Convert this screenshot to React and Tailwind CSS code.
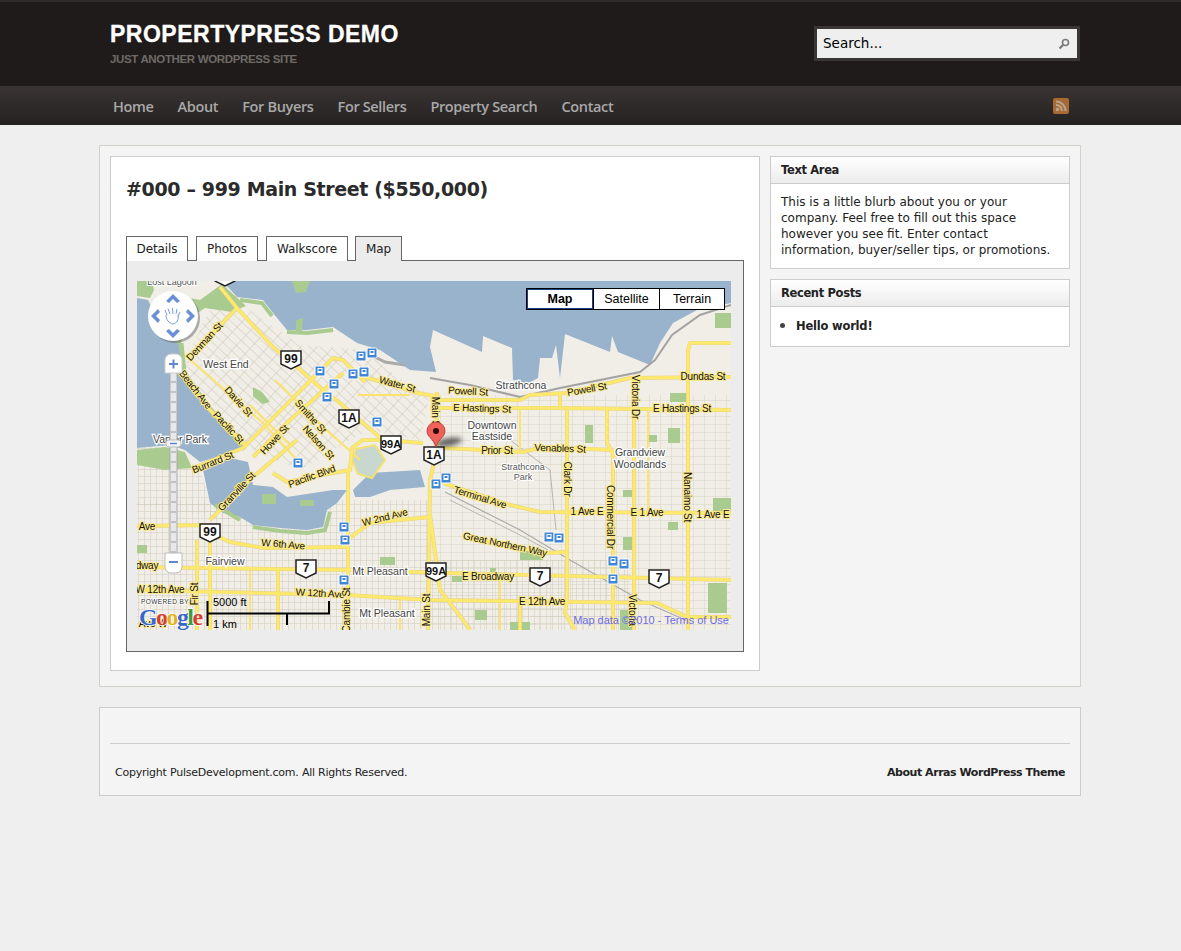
import React from 'react';

const NAV = ['Home', 'About', 'For Buyers', 'For Sellers', 'Property Search', 'Contact'];

// all map data is in page coordinates, the svg viewBox starts at 137,281
const WATER = [
  'M137,281 L731,281 L731,303 L697,310 L673,323 L660,343 L650,365 L618,352 L612,336 L610,352 L565,334 L560,378 L556,345 L552,358 L540,358 L538,378 L525,385 L513,380 L512,348 L483,336 L482,352 L433,330 L430,347 L436,372 L410,370 L395,360 L380,350 L357,343 L333,327 L307,330 L287,330 L273,313 L263,300 L237,297 L228,287 L215,281 Z',
  'M137,298 L148,300 L165,335 L180,343 L183,373 L207,407 L243,447 L230,453 L200,462 L185,450 L170,445 L137,448 Z',
  'M203,470 L230,458 L248,462 L253,485 L273,487 L287,497 L333,490 L347,490 L337,503 L327,510 L323,527 L307,530 L280,528 L253,525 L240,517 L223,513 L210,503 Z',
  'M353,490 L370,473 L420,470 L425,487 L390,490 L370,497 L355,497 Z',
];

const PARKS = [
  [713, 498, 18, 15], [708, 583, 19, 30], [475, 610, 12, 10], [520, 550, 23, 10], [623, 490, 10, 7],
  [623, 537, 9, 13], [668, 522, 10, 8], [585, 425, 8, 18], [670, 393, 17, 9], [715, 313, 16, 15],
  [668, 428, 12, 15], [647, 435, 10, 7], [380, 557, 15, 8], [137, 545, 10, 8], [510, 622, 20, 8],
  [620, 610, 16, 20], [300, 500, 14, 6], [262, 494, 14, 10], [452, 576, 10, 6], [490, 568, 6, 6],
];

const MAJOR_ROADS = [
  '220,287 237,308 273,347 297,367 323,390 340,403 363,423 383,440 423,443',
  '188,358 237,308',
  '183,373 207,407 247,447',
  '193,468 243,448 333,358 343,360 365,382',
  '253,457 290,420 343,373',
  '363,377 383,382 417,393 440,397',
  '430,408 557,408 731,410',
  '430,400 520,400 530,395 567,393 630,378 731,377',
  '443,448 523,452 543,447 613,450',
  '567,408 567,600 565,613 575,630',
  '607,410 607,443 613,453 613,630',
  '634,378 634,630',
  '731,343 690,343 688,350 688,630',
  '437,392 437,450 430,480 428,630',
  '430,515 440,590 463,620 470,630',
  '443,483 510,505 540,512 731,513',
  '463,537 547,553 567,552',
  '137,567 350,570 447,573 731,580',
  '137,590 347,595 430,600 657,603 687,617 731,617',
  '137,526 207,525 210,533 230,542 263,548 348,547',
  '347,540 370,523 430,517',
  '348,470 348,630',
  '197,540 197,630',
  '210,533 210,630',
  '278,568 278,630',
  '210,520 253,477 297,440',
  '273,473 287,482 333,473 350,470 352,448 363,440 383,440',
  '560,408 560,392',
  '520,600 520,630',
];

const MINOR_ROADS = [
  '188,358 263,423 297,460',
  '297,403 360,460',
  '275,380 335,438',
  '250,405 290,445',
  '358,395 410,395',
  '500,573 500,630',
  '400,598 400,630',
  '250,568 250,630',
  '648,410 648,513',
  '520,408 520,450',
];

const LABELS = [
  ['Denman St', 205, 342, -47], ['Beach Ave', 195, 390, 52], ['Davie St', 238, 402, 48], ['Pacific St', 228, 428, 47],
  ['Smithe St', 310, 417, 48], ['Nelson St', 318, 443, 48], ['Howe St', 275, 440, -47], ['Burrard St', 213, 463, -22],
  ['Pacific Blvd', 312, 477, -20], ['Granville St', 237, 492, -47], ['W 2nd Ave', 385, 518, -14], ['W 6th Ave', 283, 545, 5],
  ['Ave', 147, 527, 0], ['dway', 147, 566, 0], ['W 12th Ave', 160, 590, 0], ['W 12th Ave', 320, 594, 3], ['Ave W', 153, 624, 0],
  ['Fir St', 195, 594, -90], ['Water St', 397, 385, 15], ['Main St', 435, 413, 90], ['Powell St', 468, 392, 3],
  ['Powell St', 587, 390, -10], ['Victoria Dr', 635, 397, 90], ['Dundas St', 703, 377, 0], ['E Hastings St', 482, 409, 2],
  ['E Hastings St', 682, 409, 0], ['Prior St', 497, 451, 0], ['Venables St', 560, 449, 2], ['Clark Dr', 567, 479, 90],
  ['Terminal Ave', 480, 498, 17], ['1 Ave E', 587, 512, 0], ['E 1 Ave', 647, 513, 0], ['1 Ave E', 713, 515, 0],
  ['Commercial Dr', 610, 517, 90], ['Nanaimo St', 687, 497, 90], ['Great Northern Way', 505, 545, 12], ['E Broadway', 488, 577, 0],
  ['E 12th Ave', 542, 602, 0], ['Victoria', 632, 610, 90], ['Main St', 427, 610, -90], ['Cambie St', 347, 610, -90],
];

const PLACES = [
  ['West End', 226, 365], ['Strathcona', 521, 386], ['Downtown', 492, 426], ['Eastside', 492, 437], ['Grandview', 640, 453],
  ['Woodlands', 640, 465], ['Fairview', 225, 562], ['Mt Pleasant', 380, 572], ['Mt Pleasant', 387, 614], ['Vanier Park', 180, 440],
];

const SHIELDS = [
  ['', 225, 276], ['99', 291, 359], ['1A', 349, 418], ['99A', 391, 444], ['1A', 434, 455], ['99', 210, 532],
  ['7', 306, 568], ['99A', 436, 571], ['7', 540, 576], ['7', 659, 578],
];

const TRANSIT = [
  [372, 353], [361, 356], [320, 371], [353, 374], [364, 372], [334, 384], [327, 397], [377, 422], [298, 463],
  [344, 527], [345, 540], [344, 580], [436, 484], [446, 478], [549, 537], [559, 538], [613, 561], [624, 564], [613, 579],
];

const Shield = ({ label, x, y }) => (
  <g transform={`translate(${x},${y})`}>
    <path d="M-10,-8 L10,-8 L10,5 L0,10 L-10,5 Z" fill="#fff" stroke="#222" strokeWidth="1.5" />
    <text x="0" y="4" textAnchor="middle" fontSize={label.length > 2 ? 11 : 12} fontWeight="700" fill="#111">{label}</text>
  </g>
);

const Transit = ({ x, y }) => (
  <g transform={`translate(${x},${y})`}>
    <rect x="-5" y="-5" width="10" height="10" rx="1.5" fill="#3f87d6" stroke="#fff" strokeWidth="1" />
    <rect x="-2.5" y="-3" width="5" height="5" fill="#fff" />
    <rect x="-1.5" y="-2" width="3" height="2" fill="#3f87d6" />
  </g>
);

const MapDrawing = () => (
  <svg viewBox="137 281 594 349" className="block h-[349px] w-[594px]" fontFamily="'Liberation Sans', Arial, sans-serif">
    <defs>
      <pattern id="straightGrid" width="11" height="8" patternUnits="userSpaceOnUse">
        <path d="M0,0 H11 M0,0 V8" stroke="#d6d1c3" strokeWidth="1" fill="none" />
      </pattern>
      <pattern id="denseGrid" width="6" height="7" patternUnits="userSpaceOnUse">
        <path d="M0,0 H6 M0,0 V7" stroke="#cfcabb" strokeWidth="1" fill="none" />
      </pattern>
      <pattern id="downtownGrid" width="12" height="7" patternUnits="userSpaceOnUse" patternTransform="rotate(43)">
        <path d="M0,0 H12 M0,0 V7" stroke="#cbc6b6" strokeWidth="1" fill="none" />
      </pattern>
      <filter id="pinShadow" x="-50%" y="-100%" width="200%" height="300%">
        <feGaussianBlur stdDeviation="2.5" />
      </filter>
    </defs>

    <rect x="137" y="281" width="594" height="349" fill="#f1eee7" />
    <rect x="430" y="395" width="301" height="235" fill="url(#straightGrid)" />
    <rect x="137" y="500" width="293" height="130" fill="url(#denseGrid)" />
    <rect x="430" y="560" width="200" height="70" fill="url(#denseGrid)" />
    <polygon points="220,290 300,345 365,350 395,375 430,395 420,440 370,430 350,440 300,470 245,447 185,370 190,350" fill="url(#downtownGrid)" />
    <polygon points="137,448 170,445 200,470 210,503 230,520 137,505" fill="url(#denseGrid)" />

    {WATER.map((d, i) => <path key={i} d={d} fill="#99b3cc" />)}

    {/* parks and shoreline */}
    <path d="M137,281 L152,281 L154,290 L150,298 L137,296 Z" fill="#a9cb8f" />
    <path d="M165,305 L185,297 L200,300 L222,284 L246,306 L232,312 L205,308 L190,318 L180,345 L165,335 Z" fill="#a9cb8f" />
    <path d="M292,281 L310,281 L306,292 L296,293 Z M296,320 L303,318 L302,332 L296,333 Z" fill="#a9cb8f" />
    <path d="M181,343 L184,373 L208,407 L245,449" fill="none" stroke="#a9cb8f" strokeWidth="5" />
    <path d="M287,332 L307,333 L333,330 M240,300 L262,303 L272,316" fill="none" stroke="#a9cb8f" strokeWidth="4" />
    <path d="M137,450 L165,447 L185,452 L192,468 L165,470 L137,465 Z" fill="#a9cb8f" />
    <path d="M253,527 L280,531 L307,533 L325,530 L330,512 M215,505 L240,520" fill="none" stroke="#a9cb8f" strokeWidth="4" />
    <polygon points="253,387 262,392 270,402 262,404 253,396" fill="#a9cb8f" />
    <polygon points="356,449 375,445 385,460 372,478 358,474 352,460" fill="#c9d8cf" stroke="#f5e16f" strokeWidth="2" />
    {PARKS.map(([x, y, w, h], i) => <rect key={i} x={x} y={y} width={w} height={h} fill="#a9cb8f" />)}

    {/* rail lines */}
    <path d="M430,378 L470,385 L520,397 L560,388 L640,372 L655,360 L672,335 L700,315 L731,305" fill="none" stroke="#a3a3a3" strokeWidth="2" />
    <path d="M365,352 L385,362 L405,365" fill="none" stroke="#aaa" strokeWidth="3" />
    <path d="M445,492 L520,530 L570,560 L640,600 L690,622" fill="none" stroke="#aaa" strokeWidth="1.2" />
    <path d="M450,500 L520,535 L548,550 M510,440 L550,470 L556,530" fill="none" stroke="#b5b5b0" strokeWidth="1" />

    {MINOR_ROADS.map((p, i) => <polyline key={i} points={p} fill="none" stroke="#fbe36e" strokeWidth="2" />)}
    {MAJOR_ROADS.map((p, i) => <polyline key={i} points={p} fill="none" stroke="#e9d483" strokeWidth="4" strokeLinejoin="round" />)}
    {MAJOR_ROADS.map((p, i) => <polyline key={i} points={p} fill="none" stroke="#fde96c" strokeWidth="2.8" strokeLinejoin="round" />)}

    {PLACES.map(([text, x, y], i) => (
      <text key={i} x={x} y={y} textAnchor="middle" dominantBaseline="middle" fontSize="10.5" fill="#444" stroke="#fff" strokeWidth="2.5" paintOrder="stroke">{text}</text>
    ))}
    <text x="523" y="468" textAnchor="middle" dominantBaseline="middle" fontSize="9" fill="#555" stroke="#fff" strokeWidth="2" paintOrder="stroke">Strathcona</text>
    <text x="523" y="478" textAnchor="middle" dominantBaseline="middle" fontSize="9" fill="#555" stroke="#fff" strokeWidth="2" paintOrder="stroke">Park</text>
    <text x="172" y="285" textAnchor="middle" fontSize="9" fill="#555" stroke="#fff" strokeWidth="2" paintOrder="stroke">Lost Lagoon</text>
    {LABELS.map(([text, x, y, rot], i) => (
      <text key={i} x={x} y={y} textAnchor="middle" dominantBaseline="middle" transform={`rotate(${rot} ${x} ${y})`} fontSize="10" letterSpacing="-0.2" fill="#111" stroke="#fbe98c" strokeWidth="2" paintOrder="stroke">{text}</text>
    ))}

    {TRANSIT.map(([x, y], i) => <Transit key={i} x={x} y={y} />)}
    {SHIELDS.map(([label, x, y], i) => <Shield key={i} label={label} x={x} y={y} />)}

    {/* marker */}
    <ellipse cx="449" cy="442" rx="13" ry="4" transform="rotate(-10 449 442)" fill="#222" opacity="0.7" filter="url(#pinShadow)" />
    <path d="M436,447 C433,438 427,437 427,431 A9,9 0 1 1 445,431 C445,437 439,438 436,447 Z" fill="#f0615a" stroke="#a33" strokeWidth="0.8" />
    <circle cx="436" cy="431" r="3" fill="#2b0b0b" />

    {/* pan control */}
    <circle cx="175" cy="318" r="25" fill="#555" opacity="0.45" />
    <circle cx="173" cy="316" r="25" fill="#fff" />
    <g fill="#6b8fd4">
      <path d="M173,294 L180,301 L177,303 L173,299 L169,303 L166,301 Z" />
      <path d="M173,338 L180,331 L177,329 L173,333 L169,329 L166,331 Z" />
      <path d="M151,316 L158,309 L160,312 L156,316 L160,320 L158,323 Z" />
      <path d="M195,316 L188,309 L186,312 L190,316 L186,320 L188,323 Z" />
    </g>
    <path d="M167,315 L165,310 M170,314 L168,308.5 M173,314 L172.5,308 M176,314 L177,309 M178,316 L180,312 M166,315 C166,320 169,323 173,324 C177,323 179,320 178,315" fill="none" stroke="#7b98d4" strokeWidth="1" />

    {/* zoom slider */}
    <rect x="170" y="372" width="7" height="184" fill="#e8e8e8" stroke="#aaa" />
    {Array.from({ length: 18 }, (_, i) => (
      <path key={i} d={`M171,${382 + i * 10} H176`} stroke="#999" />
    ))}
    <path d="M165,373 V360 A6,6 0 0 1 171,354 H176 A6,6 0 0 1 182,360 V373 Z" fill="#fff" stroke="#ccc" />
    <path d="M169,364 H178 M173.5,359.5 V368.5" stroke="#5f86d2" strokeWidth="2" />
    <rect x="166" y="440" width="15" height="7" rx="3" fill="#f3f3f3" stroke="#bbb" />
    <path d="M170,443.5 H177" stroke="#5f86d2" strokeWidth="1.5" />
    <path d="M165,553 H182 V567 A6,6 0 0 1 176,573 H171 A6,6 0 0 1 165,567 Z" fill="#fff" stroke="#bbb" />
    <path d="M169,562 H178" stroke="#5f86d2" strokeWidth="2" />

    {/* logo and scale */}
    <text x="141" y="604" fontSize="6.5" fill="#333" stroke="#fff" strokeWidth="1.5" paintOrder="stroke" letterSpacing="0.4">POWERED BY</text>
    <text x="139" y="625" fontSize="24" letterSpacing="-1.6" fontWeight="700" fontFamily="'Liberation Serif', serif" stroke="#fff" strokeWidth="1.5" paintOrder="stroke">
      <tspan fill="#3a68c9">G</tspan><tspan fill="#d6402b">o</tspan><tspan fill="#e2b320">o</tspan><tspan fill="#3a68c9">g</tspan><tspan fill="#3f9c3f">l</tspan><tspan fill="#d6402b">e</tspan>
    </text>
    <path d="M207.5,601 V626 M207,613.5 H330 M329,601 V614 M287,613 V625" stroke="#000" strokeWidth="2" fill="none" />
    <text x="213" y="606" fontSize="11" fill="#000">5000 ft</text>
    <text x="213" y="628" fontSize="11" fill="#000">1 km</text>
    <text x="729" y="624" textAnchor="end" fontSize="11" fill="#6d6de0">Map data ©2010 - Terms of Use</text>
  </svg>
);

const Widget = ({ title, children }) => (
  <div className="border border-[#cccccc] bg-white">
    <h4 className="h-[27px] border-b border-[#cccccc] bg-gradient-to-b from-white to-[#ececec] px-[10px] text-[11.5px] leading-[27px] font-bold tracking-[-0.35px] text-[#222]">{title}</h4>
    {children}
  </div>
);

export default function App() {
  return (
    <div className="min-h-[951px] bg-[#efefef] text-[12px] text-[#222] font-['DejaVu_Sans',sans-serif]">
      <header className="h-[86px] border-t-2 border-[#2e2b2a] bg-[#1f1b1a]">
        <div className="flex items-start justify-between pt-[24px] pr-[101px] pl-[110px]">
          <div>
            <h1 className="text-[23px] leading-[16px] font-bold tracking-[0.5px] text-white [-webkit-text-stroke:0.3px_white] font-['Liberation_Sans',sans-serif]">PROPERTYPRESS DEMO</h1>
            <p className="mt-[11px] text-[11.5px] leading-[12px] font-bold tracking-[-0.35px] text-[#6f6a68] font-['Liberation_Sans',sans-serif]">JUST ANOTHER WORDPRESS SITE</p>
          </div>
          <div className="flex h-[35px] w-[266px] items-center border-[3px] border-[#3a3635] bg-[#efefef] pr-[7px] pl-[6px]">
            <input
              defaultValue="Search..."
              className="min-w-0 flex-1 bg-transparent text-[13.5px] text-black outline-none"
            />
            <svg width="12" height="12" viewBox="0 0 12 12" fill="none" stroke="#7a7a7a">
              <circle cx="7.5" cy="4.5" r="3" strokeWidth="1.6" />
              <path d="M5.3,6.7 L1.5,10.5" strokeWidth="2.2" />
            </svg>
          </div>
        </div>
      </header>

      <nav className="flex h-[39px] items-center justify-between bg-gradient-to-b from-[#3a3433] to-[#242221] pr-[112px] pl-[113px]">
        <ul className="flex gap-[24px] pt-[2px] text-[14.5px] font-semibold tracking-[-0.35px] text-[#a8a8a8] font-['Open_Sans',sans-serif]">
          {NAV.map((item) => <li key={item}>{item}</li>)}
        </ul>
        <svg width="16" height="16" viewBox="0 0 16 16">
          <rect width="16" height="16" rx="2" fill="#a86a33" />
          <circle cx="4.5" cy="11.5" r="1.8" fill="#b9a48e" />
          <path d="M3,7 A6,6 0 0 1 9,13 M3,3.5 A9.5,9.5 0 0 1 12.5,13" fill="none" stroke="#b9a48e" strokeWidth="2" />
        </svg>
      </nav>

      <main className="mt-[20px] ml-[99px] w-[982px] border border-[#d2d2ca] bg-[#f4f4f4] px-[10px] pt-[10px] pb-[15px]">
        <div className="flex gap-[10px]">
          <section className="h-[515px] w-[650px] border border-[#cccccc] bg-white px-[15px] pt-[18px]">
            <h2 className="text-[19px] leading-[28px] font-bold tracking-[-0.36px] text-[#2b2b2b]">#000 – 999 Main Street ($550,000)</h2>
            <div className="mt-[33px] flex gap-[8px] tracking-[-0.1px]">
              <div className="h-[25px] w-[62px] border border-b-0 border-[#666] bg-white text-center leading-[25px]">Details</div>
              <div className="h-[25px] w-[62px] border border-b-0 border-[#666] bg-white text-center leading-[25px]">Photos</div>
              <div className="h-[25px] w-[82px] border border-b-0 border-[#666] bg-white text-center leading-[25px]">Walkscore</div>
              <div className="relative z-10 -ml-px h-[25px] w-[47px] border border-b-0 border-[#666] bg-[#ececec] text-center leading-[25px]">Map</div>
            </div>
            <div className="-mt-px h-[392px] w-[618px] border border-[#666] bg-[#ececec] pt-[20px] pl-[10px]">
              <div className="relative w-[594px]">
                <MapDrawing />
                <div className="absolute top-[7px] left-[389px] flex h-[22px] w-[199px] border border-black bg-white text-[12.5px] leading-[19px] text-black font-['Liberation_Sans',sans-serif]">
                  <div className="w-[66px] border border-[#1d3f7a] text-center font-bold">Map</div>
                  <div className="w-[66px] border-l border-black pt-px text-center">Satellite</div>
                  <div className="flex-1 border-l border-black pt-px text-center">Terrain</div>
                </div>
              </div>
            </div>
          </section>

          <aside className="flex w-[300px] flex-col gap-[10px]">
            <Widget title="Text Area">
              <p className="h-[84px] px-[10px] pt-[10px] text-[12px] leading-[16px]">
                This is a little blurb about you or your company. Feel free to fill out this space however you see fit. Enter contact information, buyer/seller tips, or promotions.
              </p>
            </Widget>
            <Widget title="Recent Posts">
              <ul className="h-[39px] list-disc pt-[10px] pl-[25px] text-[11.5px] leading-[16px] font-bold tracking-[-0.2px] marker:text-[15px] marker:text-[#444]">
                <li>Hello world!</li>
              </ul>
            </Widget>
          </aside>
        </div>
      </main>

      <footer className="mt-[20px] ml-[99px] h-[89px] w-[982px] border border-[#cccccc] bg-[#f4f4f4] px-[10px] pt-[35px]">
        <div className="flex justify-between border-t border-[#cccccc] px-[5px] pt-[22px] text-[11px] leading-[14px]">
          <span className="tracking-[-0.23px]">Copyright PulseDevelopment.com. All Rights Reserved.</span>
          <span className="font-bold tracking-[-0.45px]">About Arras WordPress Theme</span>
        </div>
      </footer>
    </div>
  );
}
